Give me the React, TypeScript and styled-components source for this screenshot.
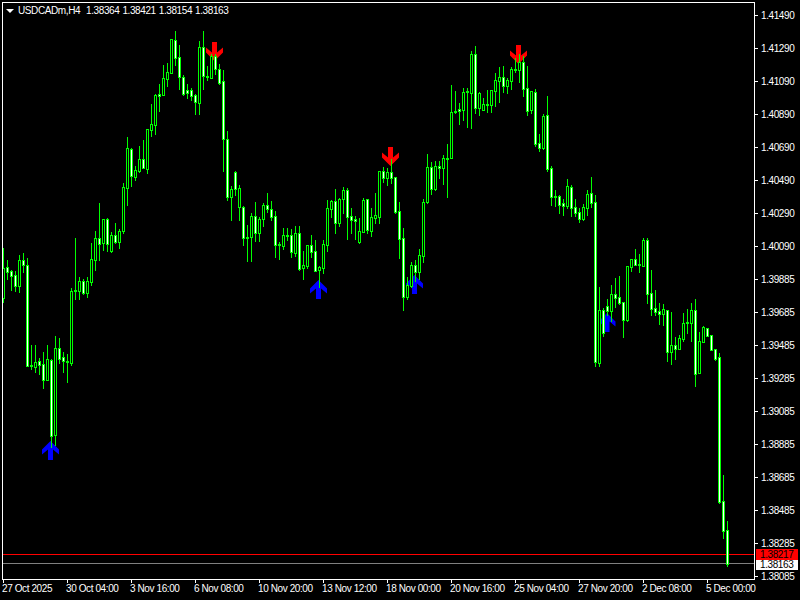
import React from "react";
import styled, { createGlobalStyle } from "styled-components";

const Global = createGlobalStyle`
  html, body { margin: 0; padding: 0; background: #000; }
`;

// wick top, body top, body bottom, wick bottom, filled (1 = white body, 0 = black body)
type Candle = [number, number, number, number, number];
const candles: Candle[] = [
  [248,268,298,302,0],[260,267,272,279,1],[270,271,276,290,1],[271,275,286,291,1],[255,260,286,292,0],[253,260,265,272,1],
  [258,265,366,366,1],[345,365,366,369,0],[345,362,367,372,0],[358,361,365,374,1],[352,364,380,388,1],[345,359,380,380,0],
  [359,360,436,447,1],[336,348,435,445,0],[338,348,359,363,1],[352,357,361,372,1],[354,361,362,382,0],[288,291,363,365,0],
  [238,290,291,299,0],[277,281,291,299,0],[279,281,293,294,1],[277,281,293,297,0],[243,259,282,285,0],[231,238,260,270,0],
  [203,238,244,260,1],[219,219,243,250,0],[218,219,244,251,1],[232,235,251,252,0],[223,235,242,243,1],[229,231,242,248,0],
  [183,187,231,233,0],[137,148,188,205,0],[148,149,176,186,1],[166,170,177,180,0],[146,159,171,172,0],[140,159,168,168,1],
  [129,129,169,173,0],[104,124,130,136,0],[94,95,125,134,0],[84,94,96,111,1],[65,78,95,95,0],[63,72,79,86,0],
  [39,39,73,73,0],[31,40,58,65,1],[45,57,77,89,1],[75,77,94,95,1],[84,90,93,98,1],[88,90,96,100,1],
  [94,95,102,114,1],[41,47,103,114,0],[31,47,76,89,1],[66,76,77,80,0],[54,56,78,78,0],[54,56,69,74,1],
  [64,69,83,84,1],[70,81,139,171,1],[131,139,197,200,1],[186,189,197,220,0],[171,172,189,195,1],[185,188,207,220,0],
  [206,207,238,245,1],[225,237,238,261,0],[213,216,237,261,0],[202,216,233,241,1],[217,219,233,241,0],[203,205,219,226,0],
  [193,205,209,212,1],[201,209,217,220,1],[211,216,245,257,1],[242,244,245,259,1],[228,235,246,249,0],[228,235,236,240,0],
  [229,235,252,257,1],[226,233,253,256,0],[226,233,269,270,1],[251,265,268,279,0],[245,245,266,268,0],[235,245,252,257,1],
  [240,251,271,271,1],[266,267,270,287,0],[240,244,268,273,0],[200,208,245,251,0],[200,201,209,217,0],[189,201,223,233,1],
  [198,199,223,226,0],[187,190,199,213,0],[188,190,217,239,1],[208,216,220,233,1],[216,219,221,239,1],[218,231,242,243,0],
  [198,200,232,232,0],[199,199,230,233,1],[208,217,231,236,0],[193,215,218,223,0],[171,171,217,223,0],[167,171,178,182,1],
  [168,172,178,185,0],[159,172,178,183,1],[177,177,212,213,1],[202,211,239,258,1],[228,238,297,310,1],[277,285,297,299,0],
  [262,265,286,287,0],[260,265,272,281,1],[249,255,272,279,0],[199,202,256,262,0],[154,167,202,203,0],[162,167,189,194,1],
  [161,166,189,190,0],[161,166,168,178,1],[155,158,168,184,0],[144,158,159,197,1],[85,112,158,158,0],[91,111,112,113,0],
  [103,109,111,124,1],[88,92,110,120,0],[88,91,92,127,0],[51,54,93,128,0],[46,54,108,113,1],[92,93,108,115,0],
  [98,104,110,110,0],[90,104,105,112,0],[90,90,105,112,0],[73,80,91,106,0],[67,77,81,102,0],[66,77,86,92,1],
  [78,80,86,93,0],[67,69,81,89,0],[58,69,70,72,0],[54,62,70,82,0],[56,62,89,96,1],[66,88,111,115,1],
  [91,91,110,113,0],[89,92,144,146,1],[134,143,148,151,1],[114,116,148,149,0],[96,115,169,171,1],[166,168,197,205,1],
  [190,196,197,206,0],[195,196,205,213,1],[199,203,206,215,1],[179,186,206,208,0],[185,187,208,216,1],[199,207,213,216,1],
  [208,212,219,222,1],[204,207,219,220,0],[190,194,208,215,0],[177,193,203,207,1],[195,202,362,366,1],[287,310,363,366,0],
  [308,310,333,336,1],[299,306,311,315,1],[285,294,311,321,0],[278,294,298,307,1],[276,297,303,304,1],[302,302,320,337,1],
  [266,266,320,321,0],[259,259,267,271,0],[249,259,265,265,1],[254,264,265,272,0],[238,240,266,266,0],[238,240,294,303,1],
  [270,293,309,315,1],[290,308,312,315,1],[303,311,314,324,1],[304,309,314,325,0],[310,310,352,361,1],[312,345,352,364,0],
  [337,345,349,359,1],[335,338,349,349,0],[313,323,339,341,0],[309,322,323,333,0],[303,310,323,341,0],[299,310,374,386,1],
  [332,341,373,373,0],[326,327,342,342,0],[328,328,336,336,1],[335,335,350,350,1],[349,349,359,360,1],[353,357,502,503,1],
  [475,501,531,538,1],[521,530,564,566,1],
];

const arrows = [
  { x: 50.5, y: 441, up: true },
  { x: 318.5, y: 280, up: true },
  { x: 414.5, y: 275, up: true },
  { x: 607, y: 313, up: true },
  { x: 214.5, y: 61, up: false },
  { x: 390.5, y: 166, up: false },
  { x: 518.5, y: 64, up: false },
];

const prices = ["1.41490","1.41290","1.41090","1.40890","1.40690","1.40490","1.40290","1.40090","1.39885","1.39685","1.39485","1.39285","1.39085","1.38885","1.38685","1.38485","1.38285","1.38085"];
const times = ["27 Oct 2025","30 Oct 04:00","3 Nov 16:00","6 Nov 08:00","10 Nov 20:00","13 Nov 12:00","18 Nov 00:00","20 Nov 16:00","25 Nov 04:00","27 Nov 20:00","2 Dec 08:00","5 Dec 00:00"];

const font = `"Liberation Sans", Arial, sans-serif`;

const Terminal = styled.div`
  width: 800px;
  height: 600px;
  box-sizing: border-box;
  padding: 2px 0 0 2px;
  background: #000;
  overflow: hidden;
  display: grid;
  grid-template-columns: 753px 1fr;
  grid-template-rows: 578px 1fr;
  font-family: ${font};
  font-size: 10px;
  letter-spacing: -0.4px;
  color: #fff;
`;

const Chart = styled.div`
  position: relative;
  box-sizing: border-box;
  border: 1px solid #fff;
  overflow: hidden;
`;

const Plot = styled.svg`
  display: block;
  width: 751px;
  height: 576px;
`;

const Legend = styled.div`
  position: absolute;
  left: 3px;
  top: 1px;
  display: flex;
  align-items: center;
  gap: 4px;
  height: 14px;
  line-height: 14px;
  white-space: pre;
  word-spacing: 0.6px;
`;

const LegendMark = styled.span`
  width: 0;
  height: 0;
  border-left: 4px solid transparent;
  border-right: 4px solid transparent;
  border-top: 4px solid #fff;
`;

const PriceAxis = styled.div`
  position: relative;
  display: flex;
  flex-direction: column;
  gap: 19px;
  padding-top: 6px;
`;

const PriceRow = styled.div`
  height: 14px;
  display: flex;
  align-items: center;
  gap: 3px;
`;

const PriceTick = styled.span`
  width: 3px;
  height: 1px;
  background: #fff;
`;

const PriceText = styled.span`
  line-height: 14px;
  padding-top: 2px;
`;

const PriceBadge = styled.div<{ $top: number; $bg: string; $h: number }>`
  position: absolute;
  left: 1px;
  top: ${(p) => p.$top}px;
  width: 38px;
  height: ${(p) => p.$h}px;
  line-height: ${(p) => p.$h}px;
  padding-left: 4px;
  background: ${(p) => p.$bg};
  color: #000;
`;

const TimeAxis = styled.div`
  grid-column: 1 / -1;
  display: flex;
`;

const TimeLabel = styled.div`
  flex: 0 0 64px;
  white-space: nowrap;
  line-height: 12px;
  &::before {
    content: "";
    display: block;
    width: 1px;
    height: 3px;
    margin-left: 1px;
    background: #fff;
  }
`;

const Arrow = ({ x, y, up }: { x: number; y: number; up: boolean }) => (
  <polygon
    transform={`translate(${x} ${y}) scale(1 ${up ? 1 : -1})`}
    points="0,0 8.5,8.5 8.5,13.5 2.5,8.5 2.5,19 -2.5,19 -2.5,8.5 -8.5,13.5 -8.5,8.5"
    fill={up ? "#0000ff" : "#ff0000"}
  />
);

const CandleMark = ({ c, i }: { c: Candle; i: number }) => {
  const x = 3 + 4 * i;
  const [wt, bt, bb, wb, filled] = c;
  return (
    <g>
      <rect x={x} y={wt} width={1} height={wb - wt + 1} fill="#00ff00" />
      <rect x={x - 1} y={bt} width={3} height={bb - bt + 1} fill="#00ff00" />
      {bb - bt > 1 && <rect x={x} y={bt + 1} width={1} height={bb - bt - 1} fill={filled ? "#ffffff" : "#000000"} />}
    </g>
  );
};

export default function App() {
  return (
    <>
      <Global />
      <Terminal>
        <Chart>
          <Plot viewBox="3 3 751 576" shapeRendering="crispEdges">
            <rect x={3} y={554} width={751} height={1} fill="#ff0000" />
            <rect x={3} y={563} width={751} height={1} fill="#808080" />
            <g shapeRendering="auto">
              {arrows.map((a) => (
                <Arrow key={a.x} {...a} />
              ))}
            </g>
            {candles.map((c, i) => (
              <CandleMark key={i} c={c} i={i} />
            ))}
          </Plot>
          <Legend>
            <LegendMark />
            <span>USDCADm,H4  1.38364 1.38421 1.38154 1.38163</span>
          </Legend>
        </Chart>
        <PriceAxis>
          {prices.map((p) => (
            <PriceRow key={p}>
              <PriceTick />
              <PriceText>{p}</PriceText>
            </PriceRow>
          ))}
          <PriceBadge $top={547} $h={11} $bg="#ff0000">1.38217</PriceBadge>
          <PriceBadge $top={558} $h={10} $bg="#ffffff">1.38163</PriceBadge>
        </PriceAxis>
        <TimeAxis>
          {times.map((t) => (
            <TimeLabel key={t}>{t}</TimeLabel>
          ))}
        </TimeAxis>
      </Terminal>
    </>
  );
}
